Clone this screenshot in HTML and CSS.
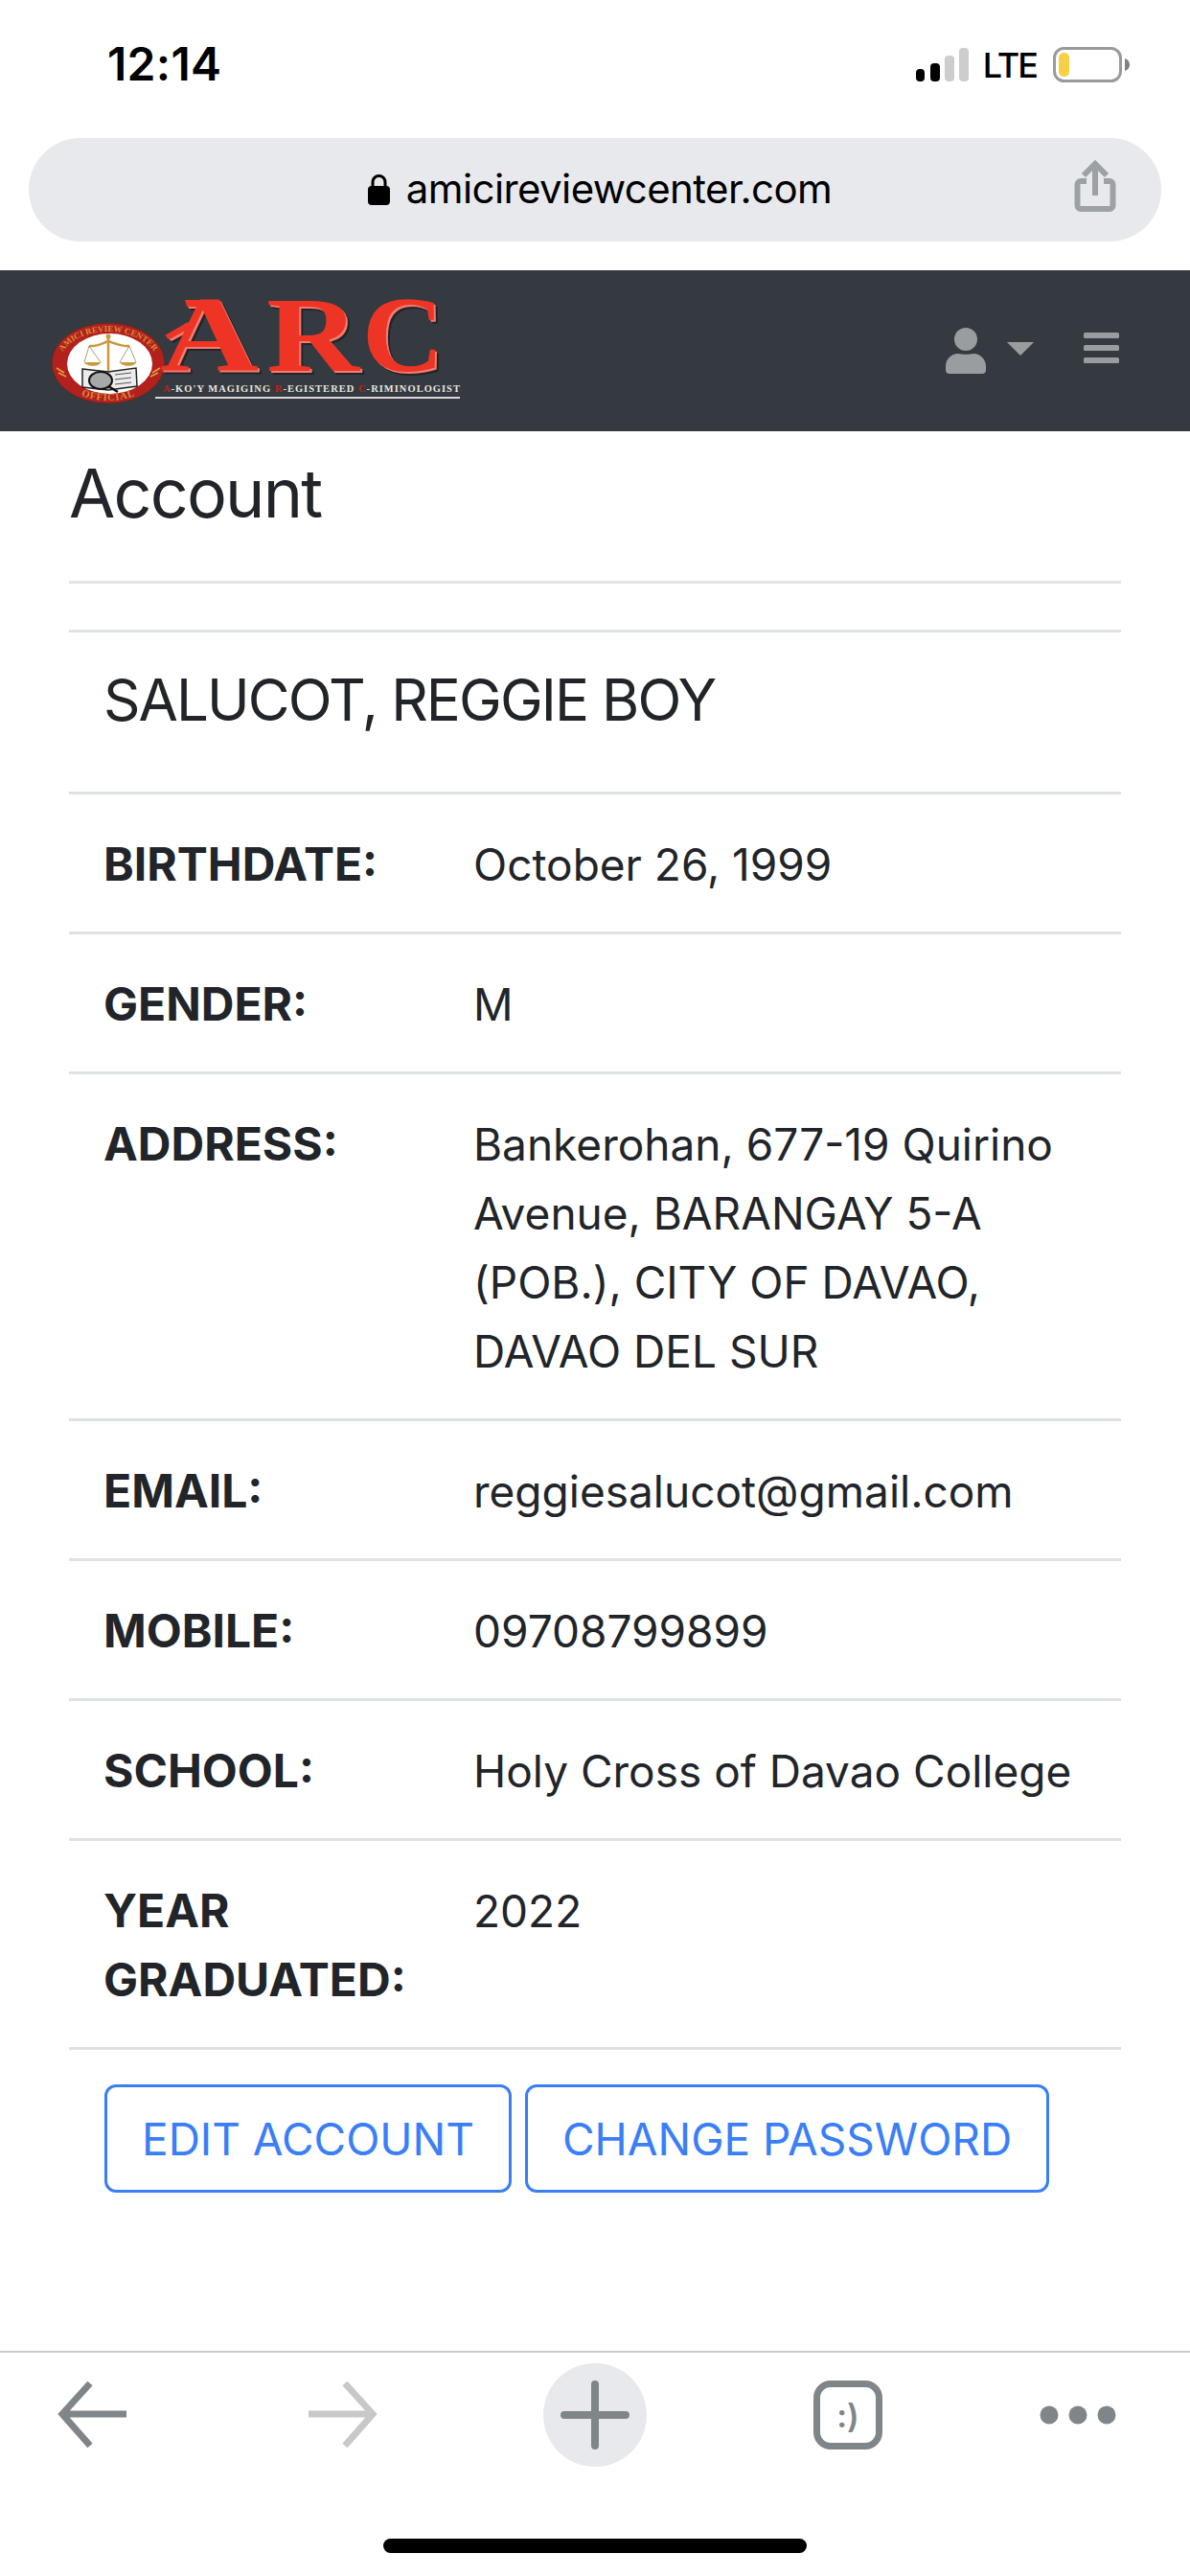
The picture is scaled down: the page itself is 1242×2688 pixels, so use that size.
FILE: index.html
```html
<!DOCTYPE html>
<html lang="en">
<head>
<meta charset="utf-8">
<title>Account</title>
<link rel="stylesheet" href="styles.css">
</head>
<body>
<div class="phone">
  <header class="chrome">
    <div class="status">
      <span class="time">12:14</span>
      <div class="status-right">
        <svg class="signal" viewBox="957 48 56 40" width="56" height="40">
          <rect x="957" y="72" width="9" height="13" rx="4" fill="#000"/>
          <rect x="972" y="66" width="10" height="19" rx="4" fill="#000"/>
          <rect x="987" y="58" width="10" height="27" rx="4" fill="#cdcdcd"/>
          <rect x="1002" y="50" width="10" height="35" rx="4" fill="#cdcdcd"/>
        </svg>
        <span class="lte">LTE</span>
        <svg class="battery" viewBox="1099 48 80 40" width="80" height="40">
          <rect x="1100.5" y="50.5" width="69" height="34" rx="10" fill="none" stroke="#9a9a9a" stroke-width="3"/>
          <rect x="1105" y="55" width="11" height="25" rx="5" fill="#f9d045"/>
          <path d="M1174 61c3 1 5 3 5 6.500s-2 5.500-5 6.500z" fill="#808080"/>
        </svg>
      </div>
    </div>
    <div class="urlbar">
      <span></span>
      <div class="url">
        <svg class="lock" viewBox="385 180 24 32" width="24" height="32">
          <path d="M390 194v-6a6.500 6.500 0 0 1 13 0v6" fill="none" stroke="#000" stroke-width="3"/>
          <rect x="385" y="192" width="23" height="20" rx="4" fill="#000"/>
        </svg>
        <span class="url-text">amicireviewcenter.com</span>
      </div>
      <svg class="share" viewBox="1120 165 46 58" width="46" height="58">
        <path d="M1134 189h-6a3.500 3.500 0 0 0-3.500 3.500v22a3.500 3.500 0 0 0 3.500 3.500h30a3.500 3.500 0 0 0 3.500-3.500v-22a3.500 3.500 0 0 0-3.500-3.500h-6" fill="none" stroke="#9ca1a6" stroke-width="6"/>
        <path d="M1143 204v-34M1131 183l12-12 12 12" fill="none" stroke="#9ca1a6" stroke-width="6"/>
      </svg>
    </div>
  </header>

  <nav class="navbar">
    <svg class="logo" viewBox="50 282 440 168" width="440" height="168" role="img" aria-label="ARC logo">
      <defs>
        <path id="arcTop" d="M61 381a52 35 0 0 1 104 0"/>
        <path id="arcBottom" d="M57 379a56 39 0 0 0 112 0"/>
      </defs>
      <ellipse cx="113" cy="379" rx="59" ry="42" fill="#b3211d" stroke="#5f2a26" stroke-width="1"/>
      <ellipse cx="114.500" cy="379.500" rx="44.500" ry="31.500" fill="#fff"/>
      <text class="seal-text"><textPath href="#arcTop" startOffset="50%" text-anchor="middle">AMICI REVIEW CENTER</textPath></text>
      <text class="seal-text seal-bottom"><textPath href="#arcBottom" startOffset="50%" text-anchor="middle">OFFICIAL</textPath></text>
      <path d="M59 384l8 5M61 389l8 4M167 384l-8 5M165 389l-8 4" stroke="#e0a23c" stroke-width="1.500"/>
      <path d="M113 352v35M93 361c8 1 14-3 20-5 6 2 14 6 22 5" fill="none" stroke="#c99a3b" stroke-width="2.500"/>
      <circle cx="113" cy="351" r="2.500" fill="#c99a3b"/>
      <path d="M93 361l-5 17M93 361l12 17M135 361l-10 17M135 361l7 17" fill="none" stroke="#9b8148" stroke-width=".8"/>
      <path d="M88 378h17c-1 5-15 5-17 0zM125 378h17c-1 5-15 5-17 0z" fill="#c99a3b"/>
      <path d="M86 385l27 3 29-4 1 19-30 4-27-3z" fill="#ececec" stroke="#222" stroke-width="1.500"/>
      <path d="M113 388v19M120 391l17-2M120 396l17-2M120 401l17-2" stroke="#555" stroke-width="1"/>
      <ellipse cx="105" cy="397" rx="12" ry="9" fill="#a8a8a8" stroke="#111" stroke-width="2"/>
      <path d="M113 403l10 6" stroke="#111" stroke-width="2.500"/>

      <g class="arc-letters">
        <text x="167" y="387" textLength="103" lengthAdjust="spacingAndGlyphs">A</text>
        <text x="278" y="387" textLength="97" lengthAdjust="spacingAndGlyphs">R</text>
        <text x="378" y="387" textLength="85" lengthAdjust="spacingAndGlyphs">C</text>
        <path d="M193 313h34l-2 7h-30zM172 350l24-14 3 6-22 12z" fill="#ee3424"/>
      </g>
      <text class="tagline" x="170" y="409" textLength="311" lengthAdjust="spacingAndGlyphs"><tspan class="tag-red">A</tspan>-KO'Y MAGIGING <tspan class="tag-red">R</tspan>-EGISTERED <tspan class="tag-red">C</tspan>-RIMINOLOGIST</text>
      <rect x="162" y="414" width="318" height="2" fill="#d8d8d8"/>
    </svg>
    <div class="nav-actions">
      <svg class="person" viewBox="987 342 42 48" width="42" height="48">
        <circle cx="1008" cy="354" r="12" fill="#9a9da0"/>
        <path d="M991 390a4 4 0 0 1-4-4v-4c0-7 6-13 13-13 3 1 13 1 16 0 7 0 13 6 13 13v4a4 4 0 0 1-4 4z" fill="#9a9da0"/>
      </svg>
      <svg class="caret" viewBox="1051 342 28 48" width="28" height="48">
        <path d="M1051 357h28l-14 14z" fill="#9a9da0"/>
      </svg>
      <svg class="burger" viewBox="1131 342 37 48" width="37" height="48">
        <rect x="1131" y="347" width="37" height="6" rx="1.500" fill="#9a9da0"/>
        <rect x="1131" y="360" width="37" height="6" rx="1.500" fill="#9a9da0"/>
        <rect x="1131" y="373" width="37" height="6" rx="1.500" fill="#9a9da0"/>
      </svg>
    </div>
  </nav>

  <main class="content">
    <h1 class="title">Account</h1>
    <hr class="rule">
    <section class="details">
      <h2 class="name">SALUCOT, REGGIE BOY</h2>
      <dl class="rows">
        <div class="row"><dt>BIRTHDATE:</dt><dd>October 26, 1999</dd></div>
        <div class="row"><dt>GENDER:</dt><dd>M</dd></div>
        <div class="row"><dt>ADDRESS:</dt><dd>Bankerohan, 677-19 Quirino Avenue, BARANGAY 5-A (POB.), CITY OF DAVAO, DAVAO DEL SUR</dd></div>
        <div class="row"><dt>EMAIL:</dt><dd>reggiesalucot@gmail.com</dd></div>
        <div class="row"><dt>MOBILE:</dt><dd>09708799899</dd></div>
        <div class="row"><dt>SCHOOL:</dt><dd>Holy Cross of Davao College</dd></div>
        <div class="row"><dt>YEAR GRADUATED:</dt><dd>2022</dd></div>
      </dl>
    </section>
    <div class="actions">
      <a class="btn">EDIT ACCOUNT</a>
      <a class="btn">CHANGE PASSWORD</a>
    </div>
  </main>

  <footer class="toolbar">
    <div class="tools">
      <svg viewBox="60 2484 72 72" width="72" height="72">
        <path d="M132 2519H66M94 2487l-29 32 29 33" fill="none" stroke="#80858a" stroke-width="7"/>
      </svg>
      <svg viewBox="323 2484 72 72" width="72" height="72">
        <path d="M323 2519h66M361 2487l29 32-29 33" fill="none" stroke="#c8c8c8" stroke-width="7"/>
      </svg>
      <div class="new-tab">
        <svg viewBox="585 2484 72 72" width="72" height="72">
          <path d="M621 2488v64M589 2520h64" fill="none" stroke="#80858a" stroke-width="8" stroke-linecap="round"/>
        </svg>
      </div>
      <div class="tabs-btn"><span>:)</span></div>
      <svg viewBox="1085 2505 80 30" width="80" height="30">
        <circle cx="1095" cy="2520" r="9.500" fill="#80858a"/>
        <circle cx="1125" cy="2520" r="9.500" fill="#80858a"/>
        <circle cx="1155" cy="2520" r="9.500" fill="#80858a"/>
      </svg>
    </div>
    <div class="home"></div>
  </footer>
</div>
</body>
</html>
```

FILE: styles.css
```css
* { box-sizing: border-box; }
html, body { margin: 0; padding: 0; background: #fff; }
body { font-family: Inter, "Liberation Sans", sans-serif; color: #212529; }
svg { display: block; flex: none; }

.phone { width: 1242px; height: 2688px; display: flex; flex-direction: column; overflow: hidden; }

.status { height: 144px; display: flex; justify-content: space-between; align-items: flex-start; padding: 38px 63px 0 112px; }
.time { font-size: 48px; font-weight: 600; line-height: 58px; color: #000; letter-spacing: .3px; }
.status-right { display: flex; align-items: flex-start; margin-top: 10px; }
.lte { font-size: 36px; font-weight: 500; line-height: 40px; color: #000; margin: 0 17px 0 14px; letter-spacing: -2px; }

.urlbar { margin: 0 30px 30px; height: 108px; border-radius: 54px; background: #e8e9ed; display: grid; grid-template-columns: 1fr auto 1fr; align-items: center; padding-left: 10px; }
.url { display: flex; align-items: center; gap: 16px; }
.url-text { font-size: 42px; line-height: 48px; color: #000; letter-spacing: -.6px; margin-bottom: 2px; }
.share { justify-self: end; margin: 0 46px 8px 0; }

.navbar { height: 168px; background: #343a40; display: flex; align-items: center; justify-content: space-between; padding: 0 74px 0 50px; }
.nav-actions { display: flex; align-items: center; }
.caret { margin-left: 22px; }
.burger { margin-left: 52px; }

.seal-text { font-family: "Liberation Serif", serif; font-weight: 700; font-size: 9px; fill: #d98a3a; }
.seal-bottom { font-size: 10.500px; letter-spacing: .8px; }
.arc-letters { filter: drop-shadow(2px 2px 0 #f27c70) drop-shadow(2px 2px 0 #23242a); }
.arc-letters text { font-family: "Liberation Serif", serif; font-weight: 700; font-size: 112px; fill: #ee3424; }
.tagline { font-family: "Liberation Serif", serif; font-weight: 700; font-size: 10px; fill: #e9e4dd; letter-spacing: 1px; }
.tag-red { fill: #c4201a; }

.content { flex: 1; padding: 0 72px; }
.title { margin: 22px 0 48px; font-size: 70px; font-weight: 400; line-height: 86px; letter-spacing: -1.800px; }
.rule { margin: 0 0 48px; border: 0; height: 3px; background: #e5e5e5; }
.details { border-top: 3px solid #dee2e6; }
.name { margin: 0; padding: 34px 36px 60px; font-size: 60px; font-weight: 400; line-height: 72px; letter-spacing: -1.900px; }
.rows { margin: 0; border-bottom: 3px solid #dee2e6; }
.row { display: grid; grid-template-columns: 386px 1fr; border-top: 3px solid #dee2e6; padding: 37px 36px 34px; }
.row dt { font-size: 48px; font-weight: 700; line-height: 72px; width: 330px; }
.row dd { margin: 0; font-size: 46px; line-height: 72px; }

.actions { display: flex; gap: 14px; margin: 36px 0 0 37px; }
.btn { display: block; height: 113px; padding: 17px 36px; border: 3px solid #3a7ef8; border-radius: 12px; color: #3a7ef8; font-size: 46px; line-height: 75px; white-space: nowrap; }

.toolbar { height: 235px; border-top: 2px solid #cbcbcb; padding-top: 11px; }
.tools { display: grid; grid-template-columns: 192px 332px 194px 334px 146px; height: 108px; align-items: center; justify-items: center; }
.new-tab { width: 108px; height: 108px; border-radius: 50%; background: #e8e9ed; display: flex; align-items: center; justify-content: center; }
.tabs-btn { width: 72px; height: 72px; border: 7px solid #80858a; border-radius: 18px; display: flex; align-items: center; justify-content: center; font-size: 34px; font-weight: 600; color: #80858a; }
.home { width: 442px; height: 15px; border-radius: 8px; background: #000; margin: 75px auto 0; }
```
